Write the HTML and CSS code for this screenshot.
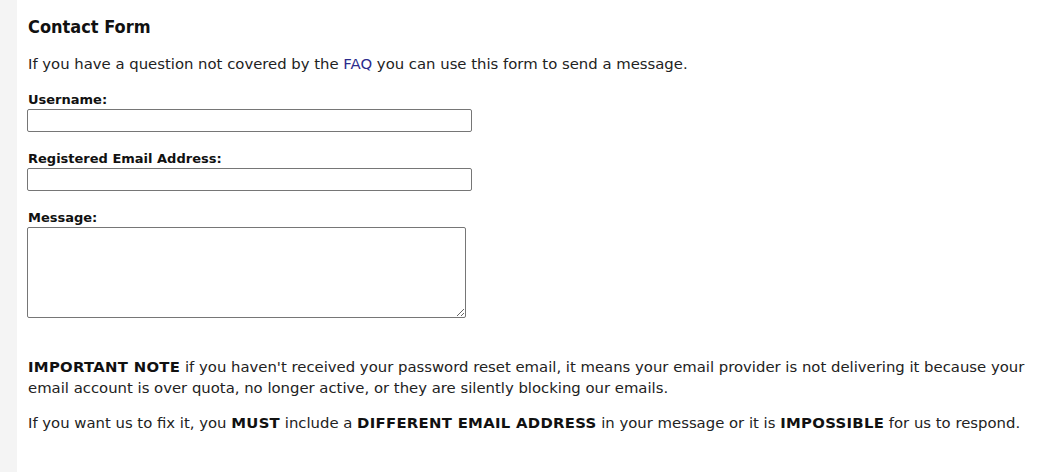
FILE: index.html
```html
<!DOCTYPE html>
<html lang="en">

<head>
    <meta charset="UTF-8">
    <meta name="viewport" content="width=device-width, initial-scale=1.0">
    <title>Contact Form</title>
    <link rel="stylesheet" href="styles.css">
</head>

<body>
    <div class="page">
        <div class="sidebar"></div>
        <div class="content">
            <h2>Contact Form</h2>
            <p class="intro">If you have a question not covered by the <a href="#">FAQ</a> you can use this form to send a message.</p>

            <form class="contact-form">
                <div class="field">
                    <label for="username">Username:</label>
                    <input type="text" id="username" name="username">
                </div>
                <div class="field">
                    <label for="email">Registered Email Address:</label>
                    <input type="text" id="email" name="email">
                </div>
                <div class="field">
                    <label for="message">Message:</label>
                    <textarea id="message" name="message"></textarea>
                </div>
            </form>

            <div class="notes">
                <p><strong>IMPORTANT NOTE</strong> if you haven't received your password reset email, it means your email provider is not delivering it because your email account is over quota, no longer active, or they are silently blocking our emails.</p>
                <p>If you want us to fix it, you <strong>MUST</strong> include a <strong>DIFFERENT EMAIL ADDRESS</strong> in your message or it is <strong>IMPOSSIBLE</strong> for us to respond.</p>
            </div>
        </div>
    </div>
</body>

</html>
```

FILE: styles.css
```css
body {
    font-family: "DejaVu Sans", Verdana, sans-serif;
    margin: 0;
    padding: 0;
    background-color: white;
    color: #222;
}

.page {
    display: flex;
    min-height: 472px;
}

.sidebar {
    width: 17px;
    background-color: #f4f4f4;
}

.content {
    flex: 1;
    padding: 16px 11px 0 11px;
    font-size: 14.85px;
}

h2 {
    font-family: "DejaVu Sans Condensed", "DejaVu Sans", sans-serif;
    font-size: 18px;
    font-weight: bold;
    margin: 0 0 18px 0;
    color: #111;
}

.intro {
    margin: 0 0 19px 0;
}

a {
    color: #2b2b8c;
    text-decoration: none;
}

.field {
    margin-bottom: 19px;
}

.field label {
    display: block;
    font-size: 13px;
    font-weight: bold;
    color: #111;
    margin-bottom: 2px;
}

input[type=text] {
    display: block;
    width: 445px;
    height: 23px;
    margin: 0 0 0 -1px;
    border: 1px solid #767676;
    border-radius: 2px;
    box-sizing: border-box;
}

textarea {
    display: block;
    width: 439px;
    height: 91px;
    margin: 0 0 0 -1px;
    border: 1px solid #767676;
    border-radius: 2px;
    box-sizing: border-box;
}

.notes {
    margin-top: 39px;
    line-height: 21px;
}

.notes p {
    margin: 0 0 14px 0;
}

.notes strong {
    color: #111;
    letter-spacing: 0.3px;
}
```
